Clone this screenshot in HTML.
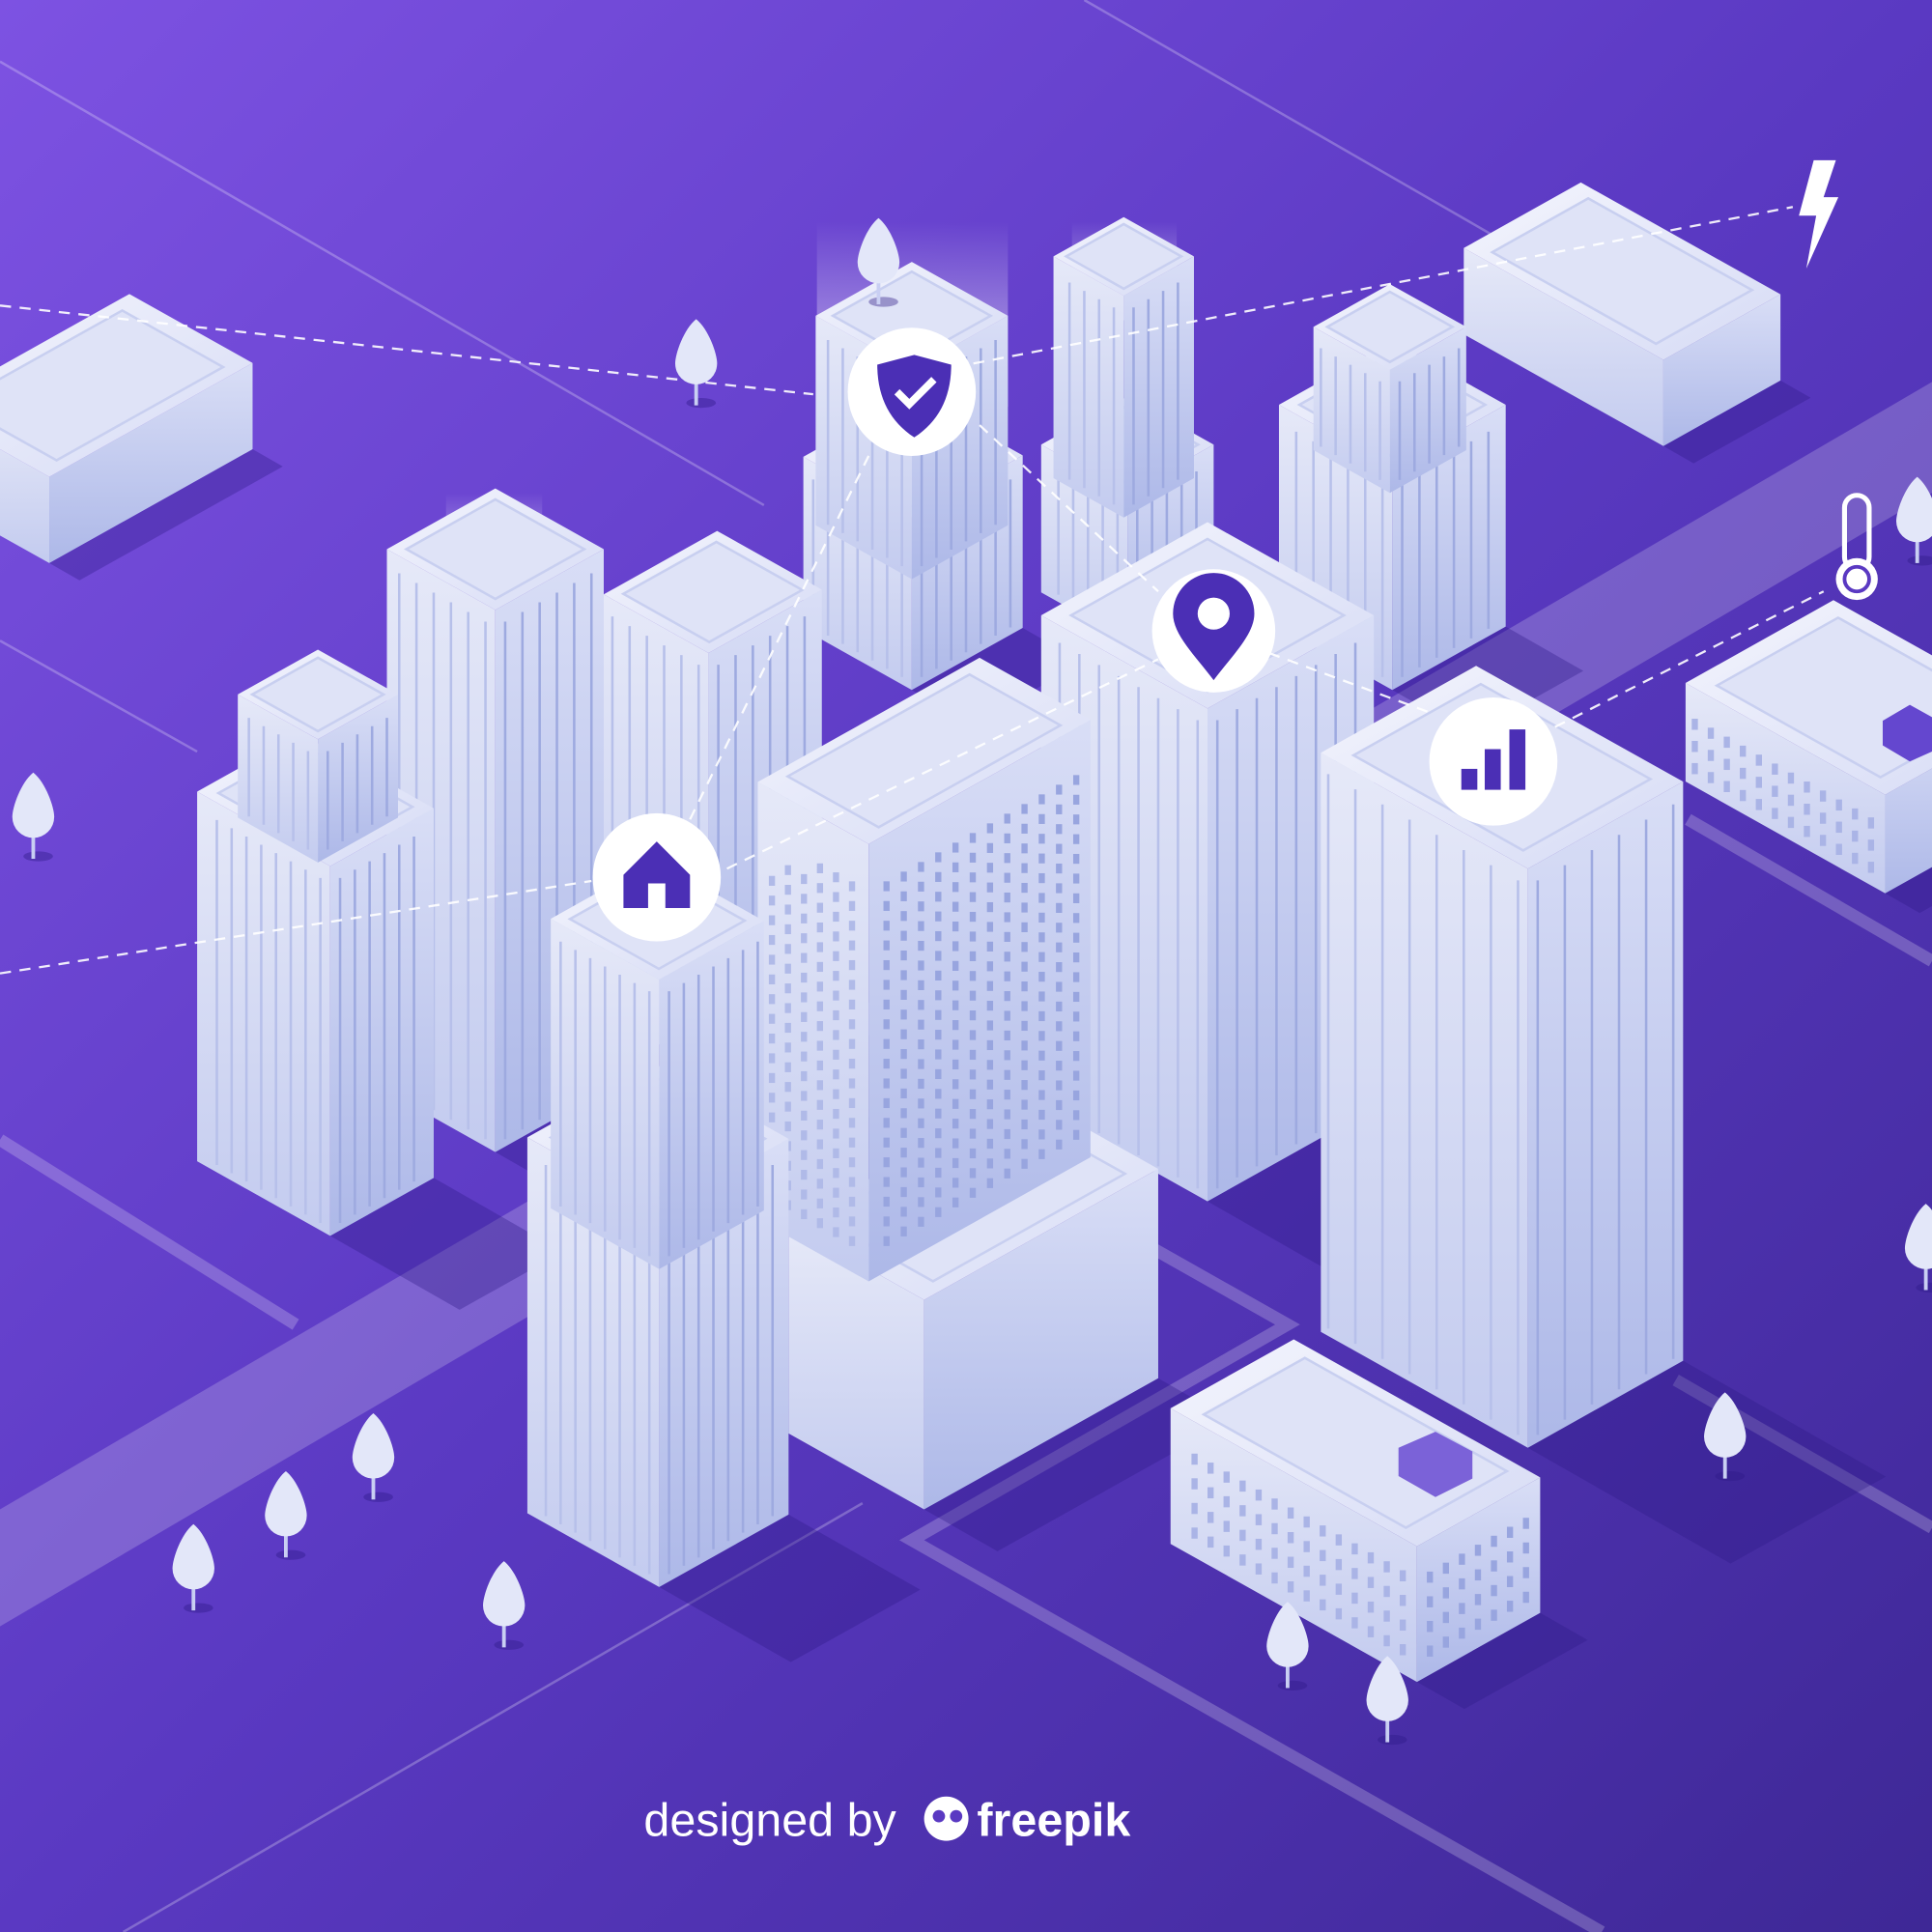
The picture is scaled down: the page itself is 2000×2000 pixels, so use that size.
<!DOCTYPE html>
<html><head><meta charset="utf-8">
<style>html,body{margin:0;padding:0;width:2000px;height:2000px;overflow:hidden}svg{display:block}</style>
</head><body>
<svg id="s" width="2000" height="2000" viewBox="0 0 1568 1568" xmlns="http://www.w3.org/2000/svg">
<defs>
<linearGradient id="bg" x1="0" y1="0" x2="1" y2="1">
<stop offset="0" stop-color="#7d52e2"/><stop offset="0.5" stop-color="#5a39c2"/><stop offset="1" stop-color="#3e2896"/></linearGradient>
<linearGradient id="lf" x1="0" y1="0" x2="0" y2="1"><stop offset="0" stop-color="#e6e9f8"/><stop offset="1" stop-color="#c3cbef"/></linearGradient>
<linearGradient id="rf" x1="0" y1="0" x2="0" y2="1"><stop offset="0" stop-color="#d9def6"/><stop offset="1" stop-color="#adb8e8"/></linearGradient>
<linearGradient id="tp" x1="0" y1="0" x2="1" y2="1"><stop offset="0" stop-color="#f4f5fd"/><stop offset="1" stop-color="#d6dbf5"/></linearGradient>
<linearGradient id="glow" x1="0" y1="1" x2="0" y2="0"><stop offset="0" stop-color="#fff" stop-opacity="0.6"/><stop offset="1" stop-color="#fff" stop-opacity="0"/></linearGradient>
</defs>
<rect width="1568" height="1568" fill="url(#bg)"/>
<g id="roads" fill="#ffffff" fill-opacity="0.2">
<polygon points="0,1225 1568,310 1568,400 0,1320"/>
</g>
<g stroke="#ffffff" stroke-opacity="0.22" stroke-width="10" fill="none">
<polyline points="0,925 240,1075"/>
<polyline points="930,1010 1045,1075 740,1250 1300,1568"/>
<polyline points="1370,665 1568,780"/>
<polyline points="1360,1120 1568,1240"/>
</g>
<g stroke="#ffffff" stroke-opacity="0.25" stroke-width="2" fill="none">
<line x1="0" y1="50" x2="620" y2="410"/>
<line x1="880" y1="0" x2="1210" y2="190"/>
<line x1="0" y1="520" x2="160" y2="610"/>
<line x1="100" y1="1568" x2="700" y2="1220"/>
</g>
<g id="sh"></g>
<g id="b"></g>
<g fill="none" stroke="#fff" stroke-width="1.8" stroke-dasharray="9 7" opacity="0.9">
<polyline points="0,248 660,320"/>
<polyline points="790,295 1455,168"/>
<polyline points="0,790 480,715"/>
<polyline points="560,665 705,370"/>
<polyline points="795,345 940,480"/>
<polyline points="590,705 940,535"/>
<polyline points="1030,530 1165,580"/>
<polyline points="1262,590 1480,480"/>
</g>
<g>
<circle cx="740" cy="318" r="52" fill="#fff"/>
<path d="M742,288 L772,296 C772,322 762,342 742,355 C722,342 712,322 712,296 Z" fill="#4b2fb5"/>
<path d="M728,318 L738,328 L758,308" stroke="#fff" stroke-width="6" fill="none"/>
<circle cx="985" cy="512" r="50" fill="#fff"/>
<path d="M985,552 C970,532 952,515 952,498 A33,33 0 0 1 1018,498 C1018,515 1000,532 985,552 Z" fill="#4b2fb5"/>
<circle cx="985" cy="498" r="13" fill="#fff"/>
<circle cx="1212" cy="618" r="52" fill="#fff"/>
<rect x="1186" y="624" width="13" height="17" fill="#4b2fb5"/>
<rect x="1205" y="608" width="13" height="33" fill="#4b2fb5"/>
<rect x="1225" y="592" width="13" height="49" fill="#4b2fb5"/>
<circle cx="533" cy="712" r="52" fill="#fff"/>
<path d="M506,710 L533,683 L560,710 L560,737 L540,737 L540,717 L526,717 L526,737 L506,737 Z" fill="#4b2fb5"/>
<path d="M1472,130 L1490,130 L1480,160 L1492,160 L1466,218 L1474,175 L1460,175 Z" fill="#fff"/>
<rect x="1497" y="402" width="20" height="60" rx="10" fill="none" stroke="#fff" stroke-width="4"/>
<circle cx="1507" cy="470" r="17" fill="#fff"/><circle cx="1507" cy="470" r="10" fill="#fff" stroke="#5a39c2" stroke-width="3"/>
</g>
<g id="t"></g>
<text x="720" y="1490" text-anchor="middle" font-family="Liberation Sans, sans-serif" font-size="38" fill="#fff">designed by <tspan font-weight="bold" dx="55">freepik</tspan></text>
<circle cx="768" cy="1476" r="18" fill="#fff"/><circle cx="762" cy="1474" r="5" fill="#5a39c2"/><circle cx="776" cy="1474" r="5" fill="#5a39c2"/>
</svg>
<script>
var k=0.56,NS="http://www.w3.org/2000/svg";
function el(p,t,a){var e=document.createElementNS(NS,t);for(var i in a)e.setAttribute(i,a[i]);p.appendChild(e);return e;}
function P(a){return a.map(function(q){return q[0].toFixed(1)+","+q[1].toFixed(1)}).join(" ");}
var g=document.getElementById("b"),sh=document.getElementById("sh");
function box(x,y,a,b,h,st,noshadow){
 var F=[x,y],L=[x-a,y-a*k],R=[x+b,y-b*k];
 var Ft=[x,y-h],Lt=[x-a,y-h-a*k],Rt=[x+b,y-h-b*k],Bt=[x-a+b,y-h-(a+b)*k];
 if(!noshadow) el(sh,"polygon",{points:P([F,R,[x+b+h*0.35,y-b*k+h*0.2],[x+h*0.35,y+h*0.2]]),fill:"#2d1a86","fill-opacity":"0.35"});
 el(g,"polygon",{points:P([F,L,Lt,Ft]),fill:"url(#lf)"});
 el(g,"polygon",{points:P([F,R,Rt,Ft]),fill:"url(#rf)"});
 if(st){
  for(var i=8;i<a-4;i+=st){el(g,"line",{x1:x-i,y1:y-i*k-6,x2:x-i,y2:y-h-i*k+14,stroke:"#b7c0ea","stroke-width":"2"});}
  for(var i=8;i<b-4;i+=st){el(g,"line",{x1:x+i,y1:y-i*k-6,x2:x+i,y2:y-h-i*k+14,stroke:"#9eaae0","stroke-width":"2"});}
 }
 el(g,"polygon",{points:P([Ft,Lt,Bt,Rt]),fill:"url(#tp)"});
 var s=0.82,cx=(Ft[0]+Bt[0])/2,cy=(Ft[1]+Bt[1])/2;
 el(g,"polygon",{points:P([Ft,Lt,Bt,Rt].map(function(p){return[cx+(p[0]-cx)*s,cy+(p[1]-cy)*s]})),fill:"#dfe3f7",stroke:"#c8cff0","stroke-width":"2"});
}
function glow(x,y,w,h){el(g,"rect",{x:x,y:y,width:w,height:h,fill:"url(#glow)"});}
glow(663,180,155,150);glow(870,180,85,80);glow(362,400,78,70);
box(40,457,100,165,70,0);
box(1350,362,162,95,70,0);
box(740,560,88,90,140,12);
box(740,470,78,78,170,12,1);
box(915,520,70,70,120,12);
box(912,420,57,57,180,12,1);
box(1130,560,92,92,180,14);
box(1128,400,62,62,100,12,1);
box(575,870,85,92,340,14);
box(402,935,88,88,440,14);
box(268,1003,108,84,300,12);
box(258,700,65,65,100,12,1);
box(980,975,135,135,400,16);
box(750,1225,110,190,170,0);
box(705,1040,90,180,355,0,1);
for(var r=0;r<20;r++){for(var c=0;c<6;c++){var xx=705-12-c*13,yy=1040-30-r*16-(12+c*13)*k;if(yy<700)continue;el(g,"rect",{x:xx-4,y:yy,width:5,height:8,fill:"#b0bae8"});}
 for(var c=0;c<12;c++){var xx=705+12+c*14,yy=1040-30-r*16-(12+c*14)*k;if(yy<690-(12+c*14)*k+30)continue;el(g,"rect",{x:xx,y:yy,width:5,height:8,fill:"#98a5df"});}}
box(535,1288,107,105,305,12);
box(535,1030,88,85,235,12,1);
box(1240,1175,168,126,470,22);
box(1530,725,162,120,80,0);
box(1150,1365,200,100,110,0);
for(var c=0;c<14;c++)for(var r=0;r<4;r++){var xx=1150-10-c*13,yy=1365-25-r*20-(10+c*13)*k;el(g,"rect",{x:xx-4,y:yy,width:5,height:9,fill:"#aab4e6"});}
for(var c=0;c<7;c++)for(var r=0;r<4;r++){var xx=1150+8+c*13,yy=1365-25-r*20-(8+c*13)*k;el(g,"rect",{x:xx,y:yy,width:5,height:9,fill:"#98a5df"});}
for(var c=0;c<12;c++)for(var r=0;r<3;r++){var xx=1530-10-c*13,yy=725-20-r*18-(10+c*13)*k;el(g,"rect",{x:xx-4,y:yy,width:5,height:9,fill:"#aab4e6"});}
el(g,"polygon",{points:"1135,1175 1165,1162 1195,1178 1195,1200 1165,1215 1135,1198",fill:"#7b62d8"});
el(g,"polygon",{points:"1528,585 1550,572 1568,582 1568,610 1550,618 1528,605",fill:"#6447cf"});
var t=document.getElementById("t");
[[713,205],[565,287],[27,655],[1556,415],[1563,1005],[1400,1158],[303,1175],[232,1222],[157,1265],[409,1295],[1045,1328],[1126,1372]].forEach(function(p){
 el(t,"ellipse",{cx:p[0]+4,cy:p[1]+40,rx:12,ry:4,fill:"#2d1a86","fill-opacity":"0.4"});
 el(t,"line",{x1:p[0],y1:p[1]+10,x2:p[0],y2:p[1]+42,stroke:"#c9cff3","stroke-width":"3"});
 el(t,"path",{d:"M"+p[0]+","+(p[1]-28)+" C"+(p[0]+10)+","+(p[1]-20)+" "+(p[0]+17)+","+(p[1])+" "+(p[0]+17)+","+(p[1]+8)+" A17,17 0 0 1 "+(p[0]-17)+","+(p[1]+8)+" C"+(p[0]-17)+","+p[1]+" "+(p[0]-10)+","+(p[1]-20)+" "+p[0]+","+(p[1]-28)+"Z",fill:"#e3e7f9"});
});
</script>
</body></html>
